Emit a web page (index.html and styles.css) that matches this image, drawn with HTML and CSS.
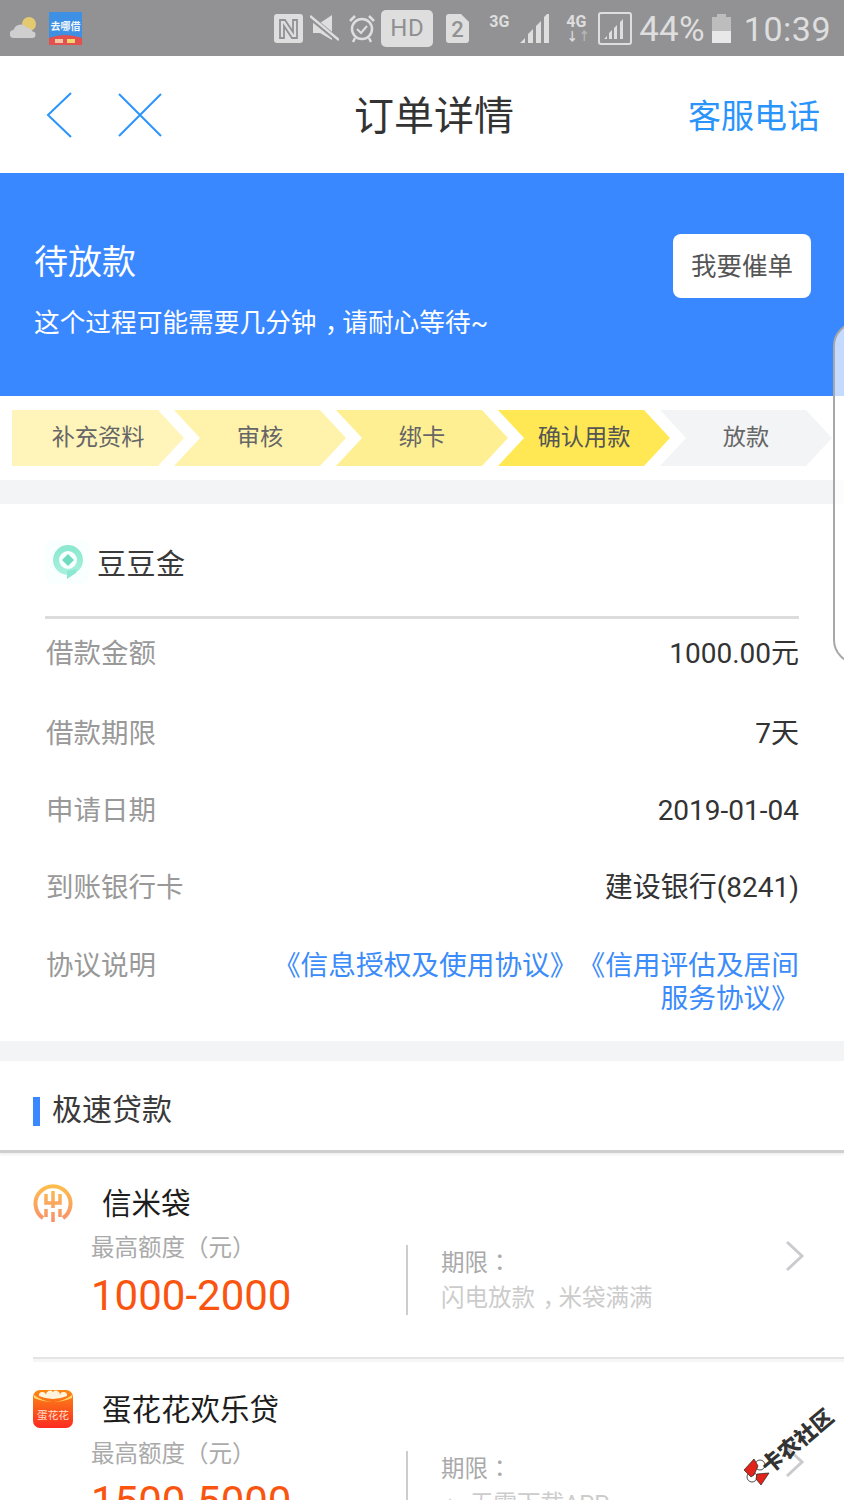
FILE: index.html
```html
<!DOCTYPE html>
<html lang="zh">
<head>
<meta charset="utf-8">
<title>订单详情</title>
<link rel="stylesheet" href="styles.css">
</head>
<body>
<div class="page">
  <div class="status">
    <div class="st-left">
      <svg width="28" height="24" viewBox="0 0 28 24"><circle cx="19" cy="8" r="7" fill="#e3c96f"/><path d="M4 22a4 4 0 0 1-.5-8 7.500 7.500 0 0 1 13.500-2 5 5 0 0 1 5.500 3.500 3.300 3.300 0 0 1 .5 6.500z" fill="#cfcfcf"/></svg>
      <svg class="i-app" width="33" height="33" viewBox="0 0 33 33"><rect width="33" height="33" fill="#3d90e3"/><path d="M0 26q16-6 33 0v7H0z" fill="#e25050"/><text x="16.500" y="18" class="app-txt">去哪借</text><rect x="6" y="27" width="8" height="4" fill="#f2c6a0"/><rect x="18" y="27" width="8" height="4" fill="#f0d56a"/></svg>
    </div>
    <div class="st-right">
      <svg width="29" height="29" viewBox="0 0 29 29"><rect width="29" height="29" rx="3" fill="#dedede"/><path d="M6 24V6h5l8 12V6h4v18h-5L10 12v12z" fill="none" stroke="#929294" stroke-width="1.800"/></svg>
      <svg class="i-mute" width="29" height="29" viewBox="0 0 29 29"><path d="M3 9h7l12-8v25l-12-7H3z" fill="#dedede"/><path d="M0 3l28 23" stroke="#929294" stroke-width="5"/><path d="M0 2l29 24" stroke="#dedede" stroke-width="2.500"/></svg>
      <svg class="i-alarm" width="26" height="29" viewBox="0 0 26 29"><circle cx="13" cy="15" r="10" fill="none" stroke="#dedede" stroke-width="2.500"/><path d="M8 15l4 4 6-7" fill="none" stroke="#dedede" stroke-width="2"/><path d="M1 7l5-5M25 7l-5-5M6 24l-2 4M20 24l2 4" stroke="#dedede" stroke-width="2.500"/></svg>
      <span class="hd">HD</span>
      <svg class="i-sim" width="23" height="29" viewBox="0 0 23 29"><path d="M3 0h12l8 8v18a3 3 0 0 1-3 3H3a3 3 0 0 1-3-3V3a3 3 0 0 1 3-3z" fill="#dedede"/><text x="11.500" y="23" class="sim-num">2</text></svg>
      <span class="net net-3g">3G</span>
      <svg class="i-sig3" width="30" height="29" viewBox="0 0 30 29"><path d="M1 29l5-5v5zM9 29v-9l5-5v14zM17 29V12l5-5v22zM25 29V3l5-5v31z" fill="#dedede"/></svg>
      <span class="net net-4g">4G<span class="arrows">↓<i>↑</i></span></span>
      <svg class="i-sig4" width="34" height="33" viewBox="0 0 34 33"><rect x="1" y="1" width="32" height="31" rx="2" fill="none" stroke="#dedede" stroke-width="2"/><path d="M6 27l3-3v3zM11 27v-6l3-3v9zM16 27V16l3-3v14zM22 27V10l3-3v20z" fill="#dedede"/></svg>
      <span class="pct">44%</span>
      <svg class="i-bat" width="19" height="29" viewBox="0 0 19 29"><rect x="5" y="0" width="9" height="3" fill="#bdbdbd"/><rect y="3" width="19" height="14" fill="#bdbdbd"/><rect y="17" width="19" height="12" fill="#e8e8e8"/></svg>
      <span class="time">10:39</span>
    </div>
  </div>

  <header class="nav">
    <div class="nav-icons">
      <svg width="28" height="48" viewBox="0 0 28 48"><path d="M25 2L2 24l23 22" fill="none" stroke="#2a94fb" stroke-width="2"/></svg>
      <svg width="44" height="44" viewBox="0 0 44 44"><path d="M1 1l42 42M43 1L1 43" fill="none" stroke="#2a94fb" stroke-width="2"/></svg>
    </div>
    <h1 class="nav-title">订单详情</h1>
    <a class="nav-link">客服电话</a>
  </header>

  <section class="banner">
    <div class="banner-text">
      <div class="banner-title">待放款</div>
      <div class="banner-sub">这个过程可能需要几分钟<span class="cm">，</span>请耐心等待~</div>
    </div>
    <div class="urge">我要催单</div>
  </section>

  <div class="steps">
    <div class="step step-1">补充资料</div>
    <div class="step step-2">审核</div>
    <div class="step step-3">绑卡</div>
    <div class="step step-4">确认用款</div>
    <div class="step step-5">放款</div>
  </div>

  <section class="card">
    <div class="prod">
      <svg width="44" height="44" viewBox="0 0 44 44"><defs><linearGradient id="g0" x1="0" y1="0" x2="0" y2="1"><stop offset="0" stop-color="#8ce8d0"/><stop offset="1" stop-color="#a6f0dd"/></linearGradient></defs><rect width="44" height="44" rx="8" fill="#f8fffe"/><circle cx="23" cy="20" r="12" fill="none" stroke="url(#g0)" stroke-width="6"/><path d="M22 31v8l9-6 1-4z" fill="#8ce8d0"/><path d="M23 14l6 6-6 6-6-6z" fill="#6fdcc0"/></svg>
      <span class="prod-name">豆豆金</span>
    </div>
    <div class="rows">
      <div class="row row-a"><span class="lab">借款金额</span><span class="val">1000.00元</span></div>
      <div class="row"><span class="lab">借款期限</span><span class="val">7天</span></div>
      <div class="row"><span class="lab">申请日期</span><span class="val">2019-01-04</span></div>
      <div class="row row-d"><span class="lab">到账银行卡</span><span class="val">建设银行(8241)</span></div>
      <div class="row"><span class="lab">协议说明</span><span class="val agree">《信息授权及使用协议》《信用评估及居间服务协议》</span></div>
    </div>
  </section>

  <section class="fast">
    <div class="fast-head"><span class="fast-mark"></span><span>极速贷款</span></div>
    <article class="loan">
      <div class="loan-top">
        <svg width="40" height="38" viewBox="0 0 40 38"><defs><linearGradient id="g1" gradientUnits="userSpaceOnUse" x1="0" y1="0" x2="0" y2="38"><stop offset="0" stop-color="#fdc04c"/><stop offset="1" stop-color="#f7906b"/></linearGradient></defs><path d="M10 34A17.500 17.500 0 1 1 30 34" fill="none" stroke="url(#g1)" stroke-width="4"/><path d="M13 10v9h14v-9M20 7v17M13 25v8M27 25v8M20 28v10" fill="none" stroke="url(#g1)" stroke-width="3.500"/></svg>
        <span class="loan-name">信米袋</span>
      </div>
      <div class="loan-body">
        <div class="loan-amt"><div class="amt-lab">最高额度（元）</div><div class="amt-num">1000-2000</div></div>
        <div class="loan-info"><div class="info-lab">期限<span class="pm" lang="zh-TW">：</span></div><div class="info-txt">闪电放款<span class="cm">，</span>米袋满满</div></div>
        <svg class="chev" width="20" height="32" viewBox="0 0 20 32"><path d="M2 2l15 14L2 30" fill="none" stroke="#cbcbcf" stroke-width="3"/></svg>
      </div>
    </article>
    <article class="loan">
      <div class="loan-top">
        <svg width="40" height="38" viewBox="0 0 40 38"><defs><linearGradient id="g2" x1="0" y1="0" x2="0" y2="1"><stop offset="0" stop-color="#fb8a14"/><stop offset="1" stop-color="#fc2a22"/></linearGradient></defs><rect width="40" height="38" rx="7" fill="url(#g2)"/><path d="M1 5q19 14 38 0v3q-19 8-38 0z" fill="#ffd96b"/><path d="M6 6a3 3 0 0 1 7-1 4 4 0 0 1 7-3 4 4 0 0 1 7 3 3 3 0 0 1 7 1q-14 6-28 0z" fill="#fff3dc"/><text x="20" y="29" class="logo-txt">蛋花花</text></svg>
        <span class="loan-name">蛋花花欢乐贷</span>
      </div>
      <div class="loan-body">
        <div class="loan-amt"><div class="amt-lab">最高额度（元）</div><div class="amt-num">1500-5000</div></div>
        <div class="loan-info"><div class="info-lab">期限<span class="pm" lang="zh-TW">：</span></div><div class="info-txt"><span class="tri">▲</span>无需下载APP</div></div>
        <svg class="chev" width="20" height="32" viewBox="0 0 20 32"><path d="M2 2l15 14L2 30" fill="none" stroke="#cbcbcf" stroke-width="3"/></svg>
      </div>
    </article>
  </section>

  <div class="edge-panel"></div>
  <div class="wm">
    <svg width="27" height="28" viewBox="0 0 27 28"><circle cx="17" cy="8" r="5" fill="#fff" stroke="#222" stroke-width=".8"/><circle cx="9" cy="20" r="5" fill="#fff" stroke="#222" stroke-width=".8"/><path d="M1 13L11 2l4 7-4 9-3 2zM14 17l12-1-2 3-6 9-5-6z" fill="#e2231a" stroke="#222" stroke-width=".7"/></svg>
    <span class="wm-text">卡农社区</span>
  </div>
</div>
</body>
</html>
```

FILE: styles.css
```css
* { box-sizing: border-box; }
html, body { margin: 0; padding: 0; }
body { background: #fff; font-family: "Roboto", "Noto Sans CJK SC", sans-serif; }
.page { position: relative; width: 844px; height: 1500px; overflow: hidden; background: #fff; }
.pm { font-family: "Noto Sans CJK TC", sans-serif; }
.cm { margin-left: .32em; letter-spacing: -.32em; }

.status { height: 56px; background: #929294; display: flex; align-items: center; justify-content: space-between; padding: 0 13px 0 10px; color: #dedede; }
.st-left { display: flex; align-items: center; gap: 11px; }
.i-app { margin-top: 1px; }
.app-txt { font: 700 10px "Noto Sans CJK SC", sans-serif; fill: #f0f6fc; text-anchor: middle; }
.st-right { display: flex; align-items: center; height: 56px; }
.i-mute { margin-left: 7px; }
.i-alarm { margin-left: 10px; }
.hd { width: 52px; height: 37px; margin-left: 6px; background: #dedede; color: #8f8f91; border-radius: 5px; display: flex; align-items: center; justify-content: center; font-size: 24px; letter-spacing: .5px; }
.i-sim { margin-left: 13px; }
.sim-num { font: 500 22px "Roboto", sans-serif; fill: #929294; text-anchor: middle; }
.net { font-weight: 700; }
.net-3g { margin-left: 20px; width: 22px; font-size: 16px; line-height: 16px; align-self: flex-start; margin-top: 14px; }
.i-sig3 { margin-left: 8px; }
.net-4g { margin-left: 17px; width: 23px; font-size: 16px; line-height: 16px; align-self: flex-start; margin-top: 14px; }
.arrows { display: block; font-size: 12px; line-height: 14px; text-align: center; white-space: nowrap; }
.arrows i { font-style: normal; color: #b8b8b8; }
.i-sig4 { margin-left: 9px; }
.pct { font-size: 35px; margin: 2px 0 0 7px; letter-spacing: .2px; }
.i-bat { margin-left: 7px; }
.time { font-size: 34px; margin: 2px 0 0 13px; letter-spacing: .5px; }

.nav { position: relative; height: 117px; display: flex; align-items: center; justify-content: space-between; padding: 0 24px 0 46px; }
.nav-icons { display: flex; align-items: center; gap: 44px; }
.nav-title { position: absolute; left: 24px; right: 0; margin: 0; padding-bottom: 3px; text-align: center; font-size: 40px; font-weight: 400; color: #333; }
.nav-link { font-size: 33px; color: #2a94fb; padding-bottom: 2px; }

.banner { height: 223px; background: #3a88ff; color: #fff; display: flex; justify-content: space-between; padding: 62px 33px 0 34px; }
.banner-title { font-size: 34px; line-height: 54px; }
.banner-sub { font-size: 25.700px; line-height: 40px; margin-top: 14px; }
.urge { width: 138px; height: 64px; margin-top: -1px; background: #fff; border-radius: 8px; color: #555; font-size: 25.500px; padding-bottom: 6px; display: flex; align-items: center; justify-content: center; }

.steps { height: 84px; padding: 14px 0 0 12px; display: flex; }
.step { flex: none; width: 172px; height: 56px; margin-right: -10px; clip-path: polygon(0 0, 146px 0, 172px 50%, 146px 100%, 0 100%, 26px 50%); display: flex; align-items: center; justify-content: center; color: #666; font-size: 23.200px; padding-bottom: 7px; }
.step-1 { clip-path: polygon(0 0, 146px 0, 172px 50%, 146px 100%, 0 100%); background: #fff5bb; }
.step-2 { background: #fff3ac; }
.step-3 { background: #ffef93; }
.step-4 { background: #ffe854; color: #555; }
.step-5 { background: #f3f4f6; }

.card { border-top: 24px solid #f3f4f6; border-bottom: 20px solid #f3f4f6; height: 581px; }
.prod { margin: 0 45px; height: 115px; display: flex; align-items: center; gap: 8px; padding-top: 4px; border-bottom: 3px solid #dcdcdc; }
.prod-name { font-size: 29px; color: #3a3a3a; letter-spacing: .5px; }
.rows { padding: 18px 45px 0 46px; }
.row { display: flex; justify-content: space-between; align-items: flex-start; font-size: 27.500px; line-height: 33px; margin-bottom: 44px; }
.row-a { margin-bottom: 47px; }
.row-d { margin-bottom: 45px; }
.lab { color: #999; white-space: nowrap; }
.val { color: #333; text-align: right; font-size: 28px; }
.agree { width: 530px; color: #3b8bfa; font-size: 27.700px; text-spacing-trim: space-all; }

.fast-head { height: 92px; display: flex; align-items: center; gap: 12px; padding: 2px 0 0 33px; font-size: 30px; color: #3a3a3a; border-bottom: 3px solid #cfcfcf; box-shadow: 0 2px 2px #f0f0f0; }
.fast-mark { width: 7px; height: 29px; background: #3a88ff; margin-top: 10px; }
.loan { position: relative; height: 206px; margin-left: 33px; border-bottom: 2px solid #e4e4e4; box-shadow: 0 3px 0 #f6f6f6; padding-top: 31px; }
.loan-top { display: flex; align-items: center; gap: 29px; height: 38px; }
.loan-name { font-size: 29.500px; color: #1d1d1d; padding-bottom: 4px; }
.loan-body { position: relative; display: flex; padding-left: 58px; margin-top: 11px; }
.loan-amt { width: 315px; }
.amt-lab { font-size: 23.500px; line-height: 30px; color: #aaa; }
.amt-num { font-size: 42px; line-height: 60px; color: #fa5510; margin-top: 3px; }
.loan-info { height: 70px; border-left: 2px solid #cdcdcd; padding-left: 33px; margin-top: 12px; }
.info-lab { font-size: 23.500px; line-height: 32px; color: #aaa; }
.info-txt { font-size: 23.500px; line-height: 38px; color: #ccc; }
.tri { font-size: 12px; margin: 0 14px 0 3px; vertical-align: 3px; }
.chev { position: absolute; top: 7px; left: 752px; }
.logo-txt { font: 10.700px "Noto Sans CJK SC", sans-serif; fill: #ffe0d0; text-anchor: middle; }

.edge-panel { position: absolute; left: 833px; top: 322px; width: 30px; height: 342px; border: 2px solid #a8a8aa; border-radius: 24px 0 0 24px; background: rgba(255,255,255,.7); }
.wm { position: absolute; left: 743px; top: 1405px; width: 100px; height: 80px; display: flex; align-items: flex-end; }
.wm-text { position: absolute; left: 10px; top: 18px; width: 90px; font-size: 21.500px; line-height: 32px; font-weight: 900; color: #333; white-space: nowrap; font-family: "Noto Sans CJK SC", sans-serif; transform: rotate(-40deg); }
```
